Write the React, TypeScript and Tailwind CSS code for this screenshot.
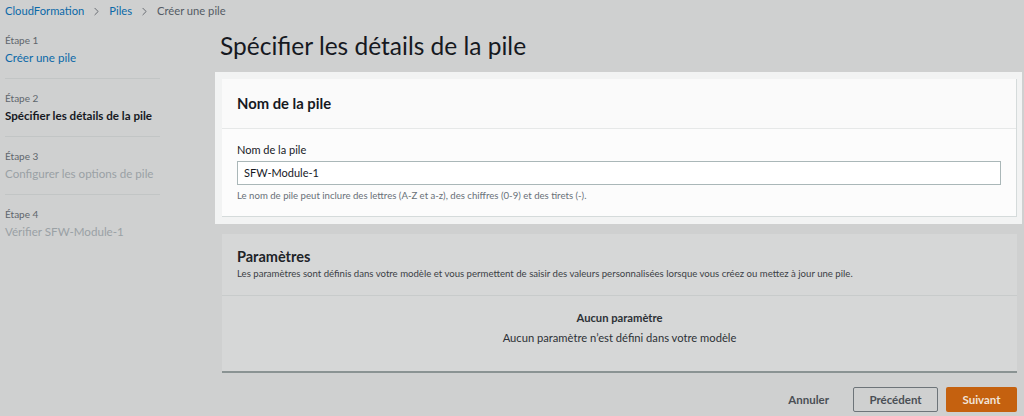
import { ChevronRight } from 'lucide-react';

const steps = [
  { step: 'Étape 1', label: 'Créer une pile', state: 'done' },
  { step: 'Étape 2', label: 'Spécifier les détails de la pile', state: 'current' },
  { step: 'Étape 3', label: 'Configurer les options de pile', state: 'todo' },
  { step: 'Étape 4', label: 'Vérifier SFW-Module-1', state: 'todo' },
];

const stepLabel: Record<string, string> = {
  done: 'text-[#0b69a8]',
  current: 'font-bold text-[#16191f]',
  todo: 'text-[#9aa1a5]',
};

export default function App() {
  return (
    <div className="h-[416px] w-[1024px] overflow-hidden bg-[#cfd0d0] font-['Lato','Noto_Sans',sans-serif] text-[#16191f]">
      <nav className="flex h-[22px] items-center pl-[5px] text-[11.2px]">
        <span className="text-[#0b69a8]">CloudFormation</span>
        <ChevronRight className="mx-[6px] h-[13px] w-[13px] text-[#62676d]" strokeWidth={1.75} />
        <span className="text-[#0b69a8]">Piles</span>
        <ChevronRight className="mx-[6px] h-[13px] w-[13px] text-[#62676d]" strokeWidth={1.75} />
        <span className="text-[#545b64]">Créer une pile</span>
      </nav>

      <div className="flex">
        <aside className="w-[215px] shrink-0 pl-[5px] pt-[11px]">
          {steps.map((s, i) => (
            <div
              key={s.step}
              className={`w-[155px] ${i < steps.length - 1 ? 'border-b border-[#c2c5c5]' : ''} ${i === 0 ? 'pb-[13px]' : 'pb-[13px] pt-[12px]'}`}
            >
              <div className="text-[10px] leading-[14px] text-[#5f666c]">{s.step}</div>
              <div className={`mt-[3px] text-[11.6px] leading-[15px] ${stepLabel[s.state]}`}>{s.label}</div>
            </div>
          ))}
        </aside>

        <main className="flex-1 pr-[2px]">
          <h1 className="h-[50px] pl-[5px] pt-[9px] text-[24.5px] leading-[30px] text-[#16191f]">
            Spécifier les détails de la pile
          </h1>

          <div className="bg-[#f2f3f3] p-[7px] pr-[5px]">
            <section className="border-b border-r border-[#d5dbdb] bg-[#fcfcfc]">
              <div className="flex h-[50px] items-center border-b border-[#e6e8e8] bg-[#fafafa] px-[15px]">
                <h2 className="text-[14.8px] font-bold">Nom de la pile</h2>
              </div>
              <div className="px-[15px] pb-[14px] pt-[14px]">
                <label className="block text-[11px] leading-[14px] text-[#16191f]">Nom de la pile</label>
                <div className="mt-[4px] flex h-[24px] items-center border border-[#aab7b8] bg-white px-[6px] text-[11px]">
                  SFW-Module-1
                </div>
                <p className="mt-[5px] text-[9.6px] leading-[12px] text-[#687078]">
                  Le nom de pile peut inclure des lettres (A-Z et a-z), des chiffres (0-9) et des tirets (-).
                </p>
              </div>
            </section>
          </div>

          <section className="ml-[7px] mr-[5px] mt-[10px] border-b-2 border-[#8a9393] bg-[#d6d7d7]">
            <div className="border-b border-[#c8cbcb] px-[15px] pb-[15px] pt-[13px]">
              <h2 className="text-[14.5px] font-bold leading-[20px] text-[#202327]">Paramètres</h2>
              <p className="mt-[1px] text-[9.6px] leading-[12px] text-[#3c4146]">
                Les paramètres sont définis dans votre modèle et vous permettent de saisir des valeurs personnalisées lorsque vous créez ou mettez à jour une pile.
              </p>
            </div>
            <div className="flex h-[75px] flex-col items-center pt-[14px] text-[11.2px] text-[#2d3136]">
              <div className="font-bold leading-[16px]">Aucun paramètre</div>
              <div className="mt-[4px] leading-[16px]">Aucun paramètre n’est défini dans votre modèle</div>
            </div>
          </section>

          <div className="mr-[5px] mt-[14px] flex items-center justify-end gap-[8px] text-[11.5px] font-bold">
            <button className="px-[16px] text-[#4a4f55]">Annuler</button>
            <button className="h-[25px] w-[85px] rounded-[2px] border border-[#6d7479] text-[#4a4f55]">
              Précédent
            </button>
            <button className="h-[25px] w-[71px] rounded-[2px] bg-[#c5610f] text-[#f1e4da]">Suivant</button>
          </div>
        </main>
      </div>
    </div>
  );
}
